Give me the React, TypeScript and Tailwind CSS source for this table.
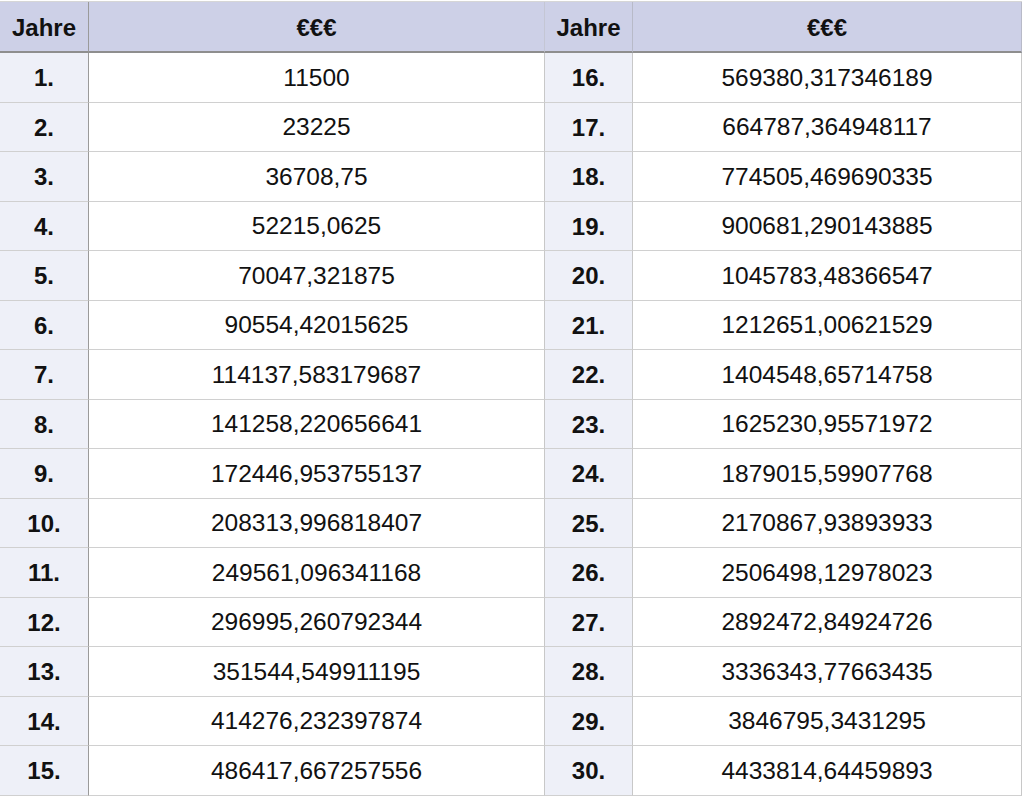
const left = [
  "11500",
  "23225",
  "36708,75",
  "52215,0625",
  "70047,321875",
  "90554,42015625",
  "114137,583179687",
  "141258,220656641",
  "172446,953755137",
  "208313,996818407",
  "249561,096341168",
  "296995,260792344",
  "351544,549911195",
  "414276,232397874",
  "486417,667257556",
];

const right = [
  "569380,317346189",
  "664787,364948117",
  "774505,469690335",
  "900681,290143885",
  "1045783,48366547",
  "1212651,00621529",
  "1404548,65714758",
  "1625230,95571972",
  "1879015,59907768",
  "2170867,93893933",
  "2506498,12978023",
  "2892472,84924726",
  "3336343,77663435",
  "3846795,3431295",
  "4433814,64459893",
];

const App = () => {
  return (
    <div className="min-h-screen bg-white pt-px font-['Liberation_Sans',Arial,sans-serif] text-[#111]">
      <div className="grid w-[1022px] grid-cols-[89px_456px_88px_389px] border-t border-[#d6d6d6]">
        {/* header */}
        <div className="flex h-[51px] items-center justify-center border-r border-b-2 border-r-[#9a9a9a] border-b-[#8e8e8e] bg-[#cdd0e7] pt-[2px] text-[24px] font-bold">
          Jahre
        </div>
        <div className="flex h-[51px] items-center justify-center border-r border-b-2 border-r-[#c4c6d4] border-b-[#8e8e8e] bg-[#cdd0e7] pt-[2px] text-[24px] font-bold">
          €€€
        </div>
        <div className="flex h-[51px] items-center justify-center border-r border-b-2 border-r-[#b8bac8] border-b-[#8e8e8e] bg-[#cdd0e7] pt-[2px] text-[24px] font-bold">
          Jahre
        </div>
        <div className="flex h-[51px] items-center justify-center border-r border-b-2 border-r-[#b8bac8] border-b-[#8e8e8e] bg-[#cdd0e7] pt-[2px] text-[24px] font-bold">
          €€€
        </div>

        {left.map((val, i) => (
          <div key={i} className="contents">
            <div className="flex h-[49.5px] items-center justify-center border-r border-b border-r-[#9a9a9a] border-b-[#d0d0d0] bg-[#eef0f8] pt-[2px] text-[24px] font-bold">
              {i + 1}.
            </div>
            <div className="flex h-[49.5px] items-center justify-center border-r border-b border-r-[#c8c8c8] border-b-[#d0d0d0] bg-white pt-[2px] text-[24.5px]">
              {val}
            </div>
            <div className="flex h-[49.5px] items-center justify-center border-r border-b border-r-[#c8c8c8] border-b-[#d0d0d0] bg-[#eef0f8] pt-[2px] text-[24px] font-bold">
              {i + 16}.
            </div>
            <div className="flex h-[49.5px] items-center justify-center border-r border-b border-r-[#c8c8c8] border-b-[#d0d0d0] bg-white pt-[2px] text-[24.5px]">
              {right[i]}
            </div>
          </div>
        ))}
      </div>
    </div>
  );
};

export default App;
